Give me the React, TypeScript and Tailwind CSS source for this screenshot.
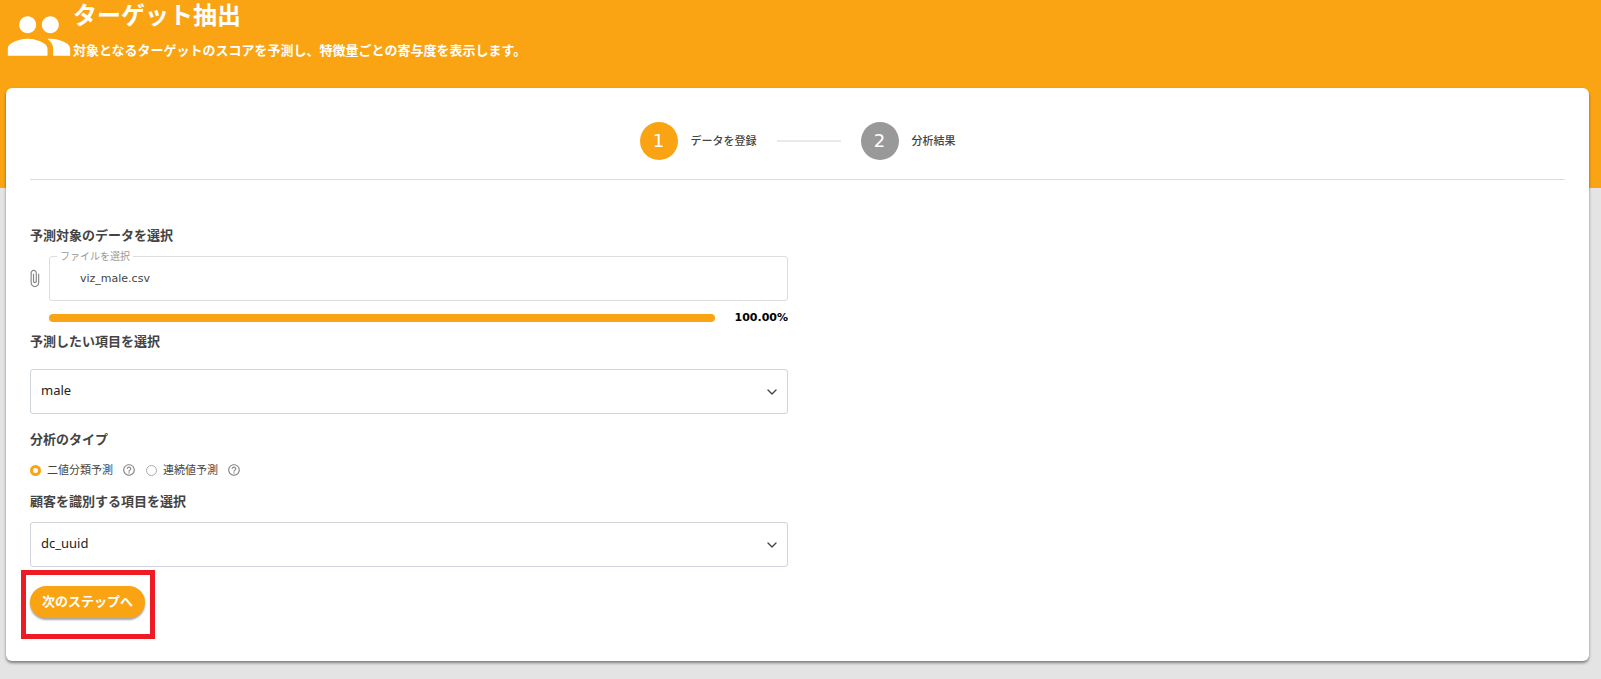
import React, { useState } from "react";
import { MdAttachFile, MdHelpOutline, MdPeople } from "react-icons/md";
import { FiChevronDown } from "react-icons/fi";

const StepCircle = ({ step, active }: { step: number; active?: boolean }) => (
  <span
    className={`flex size-[38px] items-center justify-center rounded-full font-['DejaVu_Sans',sans-serif] text-lg text-white ${
      active ? "bg-[#faa414]" : "bg-[#999999]"
    }`}
  >
    {step}
  </span>
);

const SelectBox = ({ id, options }: { id: string; options: string[] }) => {
  const [value, setValue] = useState(options[0]);

  return (
    <div className="relative">
      <select
        id={id}
        value={value}
        onChange={(e) => setValue(e.target.value)}
        className="block h-[45px] w-full appearance-none rounded-[3px] border border-[#ced4da] bg-white pb-[2px] pl-[10px] pr-8 text-[13px] text-[#222222]"
      >
        {options.map((option) => (
          <option key={option}>{option}</option>
        ))}
      </select>
      <FiChevronDown className="pointer-events-none absolute right-2 top-[15px] size-4 text-[#444444]" />
    </div>
  );
};

const TypeRadio = ({
  value,
  label,
  checked,
  onSelect,
}: {
  value: string;
  label: string;
  checked: boolean;
  onSelect: (value: string) => void;
}) => (
  <div className="flex items-center">
    <label className="flex items-center gap-[6px]">
      <input
        type="radio"
        name="analysisType"
        value={value}
        checked={checked}
        onChange={() => onSelect(value)}
        className="size-[11px] appearance-none rounded-full border border-[#aaaaaa] bg-white checked:border-[3px] checked:border-[#faa414]"
      />
      {label}
    </label>
    <MdHelpOutline className="ml-[9px] size-[14px] text-[#888888]" />
  </div>
);

const App = () => {
  const [type, setType] = useState("binary");
  const progress = 100;

  return (
    <div className="min-h-screen bg-[#e4e4e4] font-['Noto_Sans','Noto_Sans_CJK_JP',sans-serif] text-[#444444]">
      <header className="flex bg-[#faa414] pb-32 pl-[5px] font-bold text-white">
        <MdPeople className="mt-[2px] -mb-[10px] size-[68px]" />
        <div>
          <h1 className="text-2xl leading-[30px]">ターゲット抽出</h1>
          <p className="mt-[10px] text-[13px] leading-5">
            対象となるターゲットのスコアを予測し、特徴量ごとの寄与度を表示します。
          </p>
        </div>
      </header>

      <main className="-mt-25 mr-3 ml-[6px] rounded-md bg-white px-6 pt-[34px] pb-[22px] shadow-[0_2px_3px_rgba(0,0,0,0.45)]">
        <ol className="flex items-center justify-center border-b border-[#dddddd] pb-[19px] text-[11px] font-medium">
          <li className="flex items-center gap-[13px]">
            <StepCircle step={1} active />
            データを登録
          </li>
          <li className="mx-5 h-[2px] w-16 bg-[#eaeaea]" aria-hidden="true" />
          <li className="flex items-center gap-[13px]">
            <StepCircle step={2} />
            分析結果
          </li>
        </ol>

        <form
          className="mt-[45px] grid grid-cols-2 gap-[19px]"
          onSubmit={(e) => e.preventDefault()}
        >
          <div>
            <h2 className="text-[13px] leading-5 font-bold">
              予測対象のデータを選択
            </h2>
            <div className="mt-[11px] flex items-center">
              <MdAttachFile className="-ml-[5px] size-[19px] text-[#888888]" />
              <div className="relative ml-[5px] flex-1">
                <label
                  htmlFor="file"
                  className="absolute -top-2 left-2 bg-white px-[3px] text-[10px] leading-4 text-[#999999]"
                >
                  ファイルを選択
                </label>
                <input
                  id="file"
                  type="text"
                  readOnly
                  value="viz_male.csv"
                  className="block h-[45px] w-full rounded-[3px] border border-[#dddddd] bg-white pl-[30px] font-['DejaVu_Sans',sans-serif] text-[11px] text-[#444444]"
                />
              </div>
            </div>
            <div className="mt-[9px] flex items-center pl-[19px]">
              <div className="h-2 flex-1 overflow-hidden rounded-sm bg-[#eeeeee]">
                <div
                  className="h-full bg-[#faa414]"
                  style={{ width: `${progress}%` }}
                />
              </div>
              <span className="ml-5 font-['DejaVu_Sans',sans-serif] text-[11px] leading-4 font-bold text-black">
                {progress.toFixed(2)}%
              </span>
            </div>

            <label
              htmlFor="target"
              className="mt-[5px] mb-[18px] block text-[13px] leading-5 font-bold"
            >
              予測したい項目を選択
            </label>
            <SelectBox id="target" options={["male", "dc_uuid"]} />

            <fieldset className="mt-[15px]">
              <legend className="text-[13px] leading-5 font-bold">
                分析のタイプ
              </legend>
              <div className="mt-[13px] flex gap-[10px] text-[11px] leading-4">
                <TypeRadio
                  value="binary"
                  label="二値分類予測"
                  checked={type === "binary"}
                  onSelect={setType}
                />
                <TypeRadio
                  value="continuous"
                  label="連続値予測"
                  checked={type === "continuous"}
                  onSelect={setType}
                />
              </div>
            </fieldset>

            <label
              htmlFor="customer"
              className="mt-[13px] mb-[11px] block text-[13px] leading-5 font-bold"
            >
              顧客を識別する項目を選択
            </label>
            <SelectBox id="customer" options={["dc_uuid", "male"]} />

            <div className="mt-[3px] -ml-[9px] w-fit border-[5px] border-[#ed1c24] pt-[11px] pr-[5px] pb-4 pl-1">
              <button
                type="submit"
                className="block h-8 rounded-full bg-[#faa414] px-3 text-[13px] font-bold text-white shadow-[0_2px_2px_rgba(0,0,0,0.35)]"
              >
                次のステップへ
              </button>
            </div>
          </div>
        </form>
      </main>
    </div>
  );
};

export default App;
